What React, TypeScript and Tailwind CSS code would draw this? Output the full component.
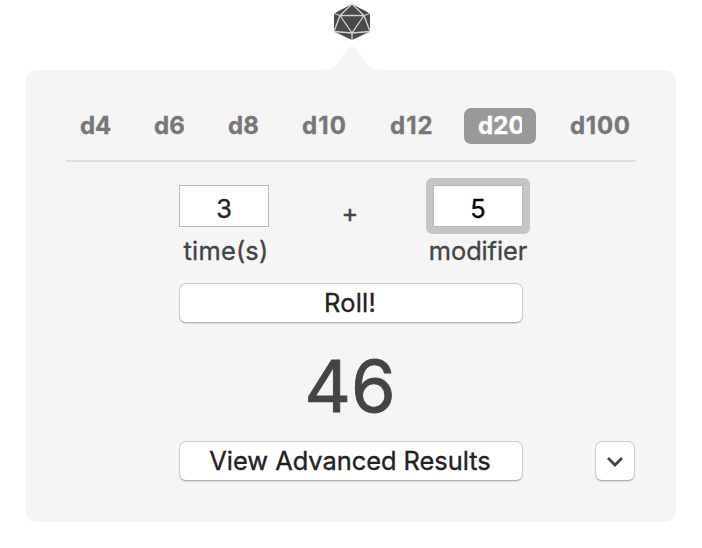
import React from "react";

const dice = [
  { label: "d4", cell: "w-[58px]", text: "w-[31px] tracking-[-0.1px]" },
  { label: "d6", cell: "w-[58px]", text: "w-[30px] tracking-[0.1px]" },
  { label: "d8", cell: "w-[58px]", text: "w-[30px] tracking-[0.1px]" },
  { label: "d10", cell: "w-[72px]", text: "w-[46px] tracking-[1.1px]" },
  { label: "d12", cell: "w-[72px]", text: "w-[46px] tracking-[1px]" },
  { label: "d20", cell: "w-[72px]", text: "w-[44px] tracking-[0.1px]" },
  { label: "d100", cell: "w-[94px]", text: "ml-[4px] w-[64px] tracking-[0.7px]" },
];

const buttonStyle =
  "flex h-[40px] items-center justify-center rounded-[7px] border border-[#cdcdcd] border-b-[#b4b4b4] bg-white shadow-[0_1px_1px_rgba(0,0,0,0.12)]";

function DieIcon() {
  return (
    <svg width="38" height="38" viewBox="0 0 38 38" className="block">
      <path d="M19 1L37 10.5V28.5L19 37L1 28.5V10.5Z" fill="#4a4a4a" />
      <path
        d="M7 12.5H31L19 30Z M19 1L7 12.5L1 28.5L19 30L37 28.5L31 12.5L19 1 M1 10.5L7 12.5M37 10.5L31 12.5M19 30V37"
        fill="none"
        stroke="#d4d4d4"
        strokeWidth="1.3"
        strokeLinejoin="round"
      />
    </svg>
  );
}

export default function App() {
  return (
    <div className="flex h-[548px] w-[702px] flex-col items-center overflow-hidden bg-white font-['Inter',sans-serif] text-[25.4px] leading-[30px] text-[#444444] [-webkit-text-stroke:0.35px_currentColor]">
      <div className="ml-[2px] mt-[3px] h-[38px]">
        <DieIcon />
      </div>
      <svg width="60" height="26" viewBox="0 0 60 26" className="ml-[2px] mt-[4px] block h-[26px] shrink-0">
        <path d="M0 25C7 25 11 23 15 18L27 3Q30 -1 33 3L45 18C49 23 53 25 60 25V26H0Z" fill="#f5f5f5" />
      </svg>
      <main className="-mt-px flex h-[452px] w-[650px] shrink-0 flex-col rounded-[10px] bg-[#f5f5f5] px-[40px] pt-[38px]">
        <nav className="flex h-[36px] gap-4">
          {dice.map((die) => (
            <button
              key={die.label}
              className={`flex h-[36px] shrink-0 items-center rounded-[7px] pl-[14px] ${die.cell} ${
                die.label === "d20" ? "bg-[#999999] text-white" : "text-[#777777]"
              }`}
            >
              <span className={`block shrink-0 overflow-hidden whitespace-nowrap text-left text-[24px] font-bold leading-[30px] ${die.text}`}>
                {die.label}
              </span>
            </button>
          ))}
        </nav>
        <div className="mt-[16px] h-[2px] w-[570px] shrink-0 bg-[#dddddd]" />
        <section className="flex px-[106px] pt-[16px]">
          <div className="flex w-[104px] flex-col items-center">
            <div className="mt-[7px] flex h-[42px] w-[90px] items-center justify-center border border-[#b8b8b8] bg-white pt-[6px] text-[#222222]">
              3
            </div>
            <span className="mt-[9px] pl-[4px] tracking-[0.2px]">time(s)</span>
          </div>
          <div className="flex flex-1 justify-center pr-[2px] pt-[20px]">+</div>
          <div className="flex w-[104px] flex-col items-center">
            <div className="flex h-[56px] w-[104px] items-center justify-center rounded-[6px] bg-[#c5c5c7]">
              <div className="flex h-[42px] w-[90px] items-center justify-center border border-[#b8b8b8] bg-white pt-[6px] text-black">
                5
              </div>
            </div>
            <span className="mt-[2px] tracking-[-0.1px]">modifier</span>
          </div>
        </section>
        <button className={`${buttonStyle} mx-auto mt-[17px] w-[344px] shrink-0 text-[#222222]`}>
          <span className="pr-[2px] tracking-[0.2px]">Roll!</span>
        </button>
        <output className="mt-[19px] block h-[88px] pr-[2px] text-center text-[72px] leading-[88px] [-webkit-text-stroke:0.9px_currentColor]">46</output>
        <div className="mt-[11px] flex pl-[113px]">
          <button className={`${buttonStyle} w-[344px] text-[#222222]`}>
            <span className="pr-[2px] tracking-[-0.02px]">View Advanced Results</span>
          </button>
          <button className={`${buttonStyle} ml-[72px] w-[40px]`} aria-label="More">
            <svg width="18" height="12" viewBox="0 0 18 12" className="mt-[2px]">
              <path d="M2 2L9 9L16 2" fill="none" stroke="#444444" strokeWidth="2.8" />
            </svg>
          </button>
        </div>
      </main>
    </div>
  );
}
